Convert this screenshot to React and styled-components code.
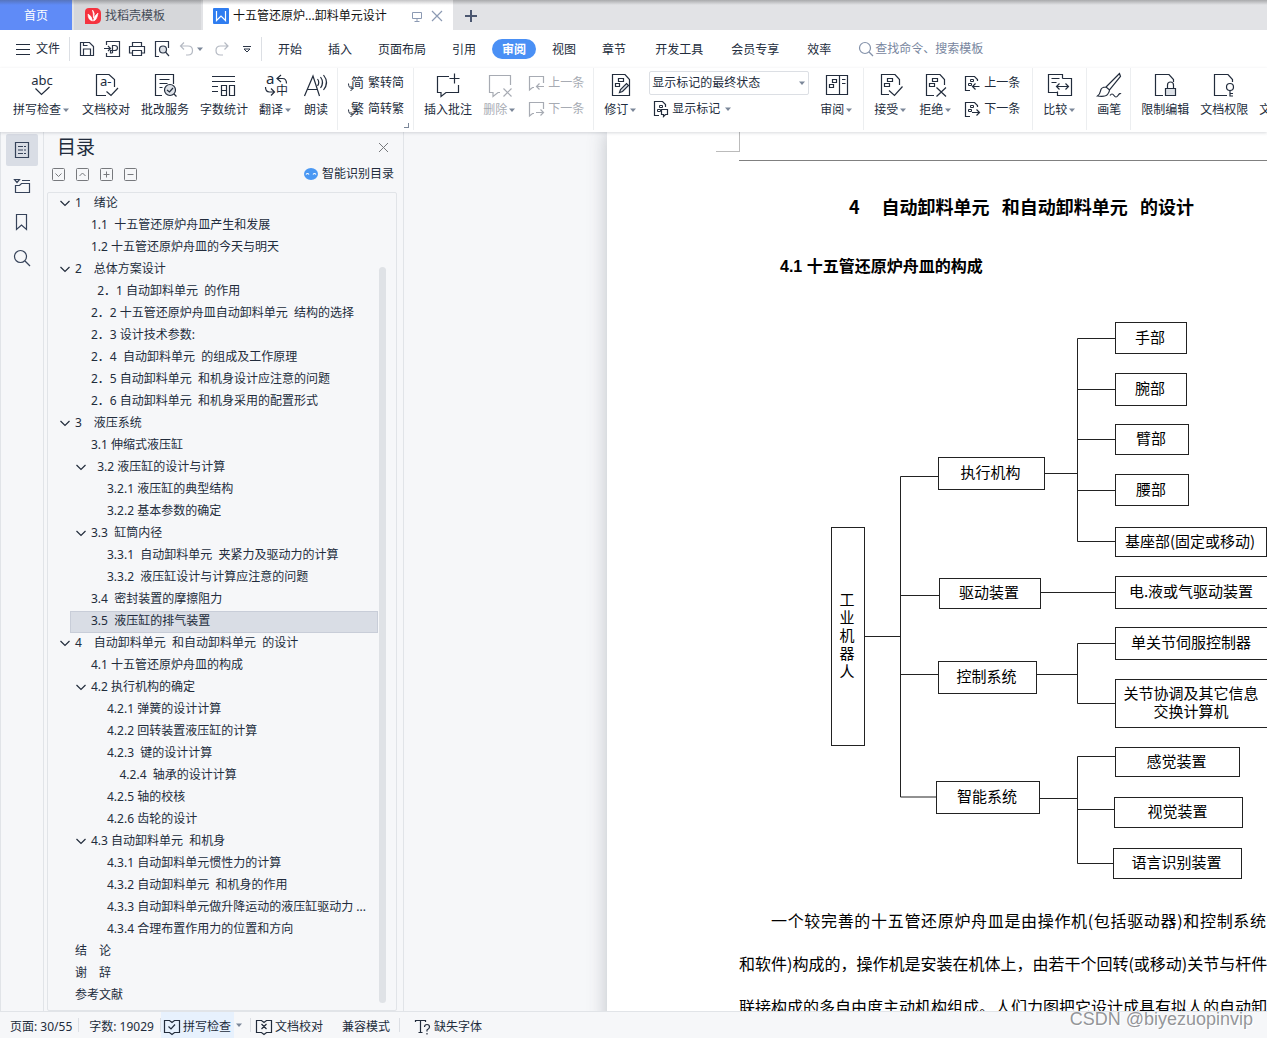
import { styled, createGlobalStyle, css } from "styled-components";

const GlobalStyle = createGlobalStyle`
  * {
    box-sizing: border-box;
  }
  body {
    margin: 0;
    background: #f6f7f9;
    color: #222c3c;
    font-family: "Noto Sans", "Noto Sans CJK SC", sans-serif;
    font-size: 12px;
    line-height: 18px;
  }
  button, input, select {
    font: inherit;
    color: inherit;
    border: 0;
    padding: 0;
    margin: 0;
    background: none;
  }
  ul, h1, h2, h3, p, figure {
    margin: 0;
    padding: 0;
    list-style: none;
    font-weight: normal;
  }
  a {
    color: inherit;
    text-decoration: none;
  }
`;

/* ---------- icons ---------- */

const Svg = styled.svg`
  display: block;
  flex: none;
  overflow: visible;
  fill: none;
  stroke: currentColor;
  stroke-width: 1.2;

  text {
    fill: currentColor;
    stroke: none;
    font-family: "Noto Sans", "Noto Sans CJK SC", sans-serif;
  }
`;

const Icon = ({ size = 24, w, children, ...rest }) => (
  <Svg
    width={w || size}
    height={size}
    viewBox={`0 0 ${w || size} ${size}`}
    aria-hidden="true"
    {...rest}
  >
    {children}
  </Svg>
);

const Arrow = () => (
  <Icon size={10}>
    <path d="M2 3.500h6L5 7z" fill="#7b8799" stroke="none" />
  </Icon>
);

const marks = <path d="M8.500 5.500h5v3h-5zM5.500 10.500h5v3h-5z" />;
const smallMarks = <path d="M6.500 4.500h3v2h-3zM4.500 8.500h3v2h-3z" strokeWidth="1" />;

const icons = {
  spell: (
    <>
      <text x="12" y="12" fontSize="13" textAnchor="middle">
        abc
      </text>
      <path d="M5.500 15.500l6 6 8-7.500" />
    </>
  ),
  proof: (
    <>
      <path d="M12 22.500H2.500v-21H15l5.500 5V14" />
      <text x="6" y="13" fontSize="13">
        a-
      </text>
      <path d="M12.500 18.500l4.500 4 7-7.500" />
    </>
  ),
  review: (
    <>
      <path d="M9 22.500H2.500v-21h18V11M6.500 6.500h10M6.500 10.500h8M6.500 14.500h3" />
      <circle cx="17" cy="17" r="5.500" fill="#dde1e7" />
      <path d="M14 17l2.500 2 3.500-4M21 21l2.500 2.500" />
    </>
  ),
  count: (
    <path d="M0 3.500h23M0 8.500h23M0 13.500h6M0 18.500h6M9.500 12.500h5v10h-5zM9.500 17.500h5M17.500 12.500h5v10h-5z" />
  ),
  translate: (
    <>
      <text x="2" y="11" fontSize="15">
        a
      </text>
      <text x="12" y="22" fontSize="12">
        中
      </text>
      <path d="M17 2l-4 3.500 4 3.500M13 5.500h5.500q4 0 4 5M1.500 14q0 5 4 5h4M7 15.500l3.500 3.500L7 22.500" />
    </>
  ),
  read: (
    <path d="M0.500 23L9 3l6.500 20M3.500 16.500h10M13.500 6q2.500 3.500 0 7M16.500 4q4 5.500 0 11M19.500 2q6 7.500 0 15" />
  ),
  comment: <path d="M13 3.500H1.500v16h3.500v4l5-4h12.500V12M18.500 0.500v10M13.500 5.500h10" />,
  remove: <path d="M12 19.500h-2l-5 4v-4H1.500v-17h21V12M15.500 15.500l8 8M23.500 15.500l-8 8" />,
  track: (
    <>
      <path d="M3.500 1.500H16l4.500 5v16h-17z" />
      <path d="M9.500 5.500h5v3h-5zM6.500 10.500h4v3h-4z" />
      <path d="M10.500 19.500l1-3 6-6 2 2-6 6z" fill="#dde1e7" />
    </>
  ),
  pane: (
    <>
      <path d="M1.500 2.500h13v19h-13zM14.500 2.500h8v19h-8zM17 6.500h3.500M17 10.500h3.500" />
      <path d="M7.500 6.500h4v3h-4zM4.500 11.500h4v3h-4z" />
    </>
  ),
  accept: (
    <>
      <path d="M10 21.500H2.500v-20H16l4.500 5V12" />
      {marks}
      <path d="M10 17.500l5.500 5 8-9" />
    </>
  ),
  reject: (
    <>
      <path d="M10 22.500H2.500v-21H16l4.500 5V12" />
      {marks}
      <path d="M12.500 14.500l9.500 9M22 14.500l-9.500 9" />
    </>
  ),
  compare: (
    <path d="M14.500 5.500v-4H.500v18h9M14.500 5.500h9v17h-14v-4M3.500 5.500h8M3.500 9.500h5M8.500 13.500h12M11.500 10.500l-3 3 3 3M17.500 10.500l3 3-3 3" />
  ),
  pen: (
    <path d="M22.500 0.500L9 14l3.500 3L23.500 3.500zM9 14q-5 0-5.500 4-.5 3-3 5 8 1 10-1.500 2-2.500 2-4.500M13 22.500q2-3 4 0t4 0 3-1.500" />
  ),
  lock: (
    <>
      <path d="M10 22.500H2.500v-21H16l4.500 5V9" />
      <path d="M12.500 15.500h10v7h-10z" fill="#dde1e7" />
      <path d="M14.500 15v-3q0-3 3-3t3 3v3" />
    </>
  ),
  key: (
    <>
      <path d="M15 22.500H2.500v-21H16l4.500 5V9" />
      <circle cx="18" cy="14" r="3.500" />
      <path d="M18 17.500v6M18 20.500h3M18 23h3" />
    </>
  ),
};

const convertArrow = <path d="M.500 8.500q0 5 4 5M2.500 11l2.500 2.500L2.500 16" strokeWidth="1" />;

const smallIcons = {
  toSimple: (
    <>
      <text x="3" y="12" fontSize="13">
        简
      </text>
      {convertArrow}
    </>
  ),
  toTraditional: (
    <>
      <text x="3" y="12" fontSize="13">
        繁
      </text>
      {convertArrow}
    </>
  ),
  commentPrev: <path d="M6 12.500H4.500l-3 2.500V1.500h14V8M16 11.500H8.500M11.500 8.500l-3 3 3 3" />,
  commentNext: <path d="M6 12.500H4.500l-3 2.500V1.500h14V8M8 11.500h7.500M12.500 8.500l3 3-3 3" />,
  markup: (
    <>
      <path d="M6 14.500H1.500v-14h8l3 3V6" />
      {smallMarks}
      <path d="M8.500 8.500h6v5h-2l-2 2v-2h-2z" />
    </>
  ),
  changePrev: (
    <>
      <path d="M6 15.500H1.500v-14h9l3 3V6" />
      {smallMarks}
      <path d="M15.500 11.500h-7M11.500 8.500l-3 3 3 3" />
    </>
  ),
  changeNext: (
    <>
      <path d="M6 15.500H1.500v-14h9l3 3V6" />
      {smallMarks}
      <path d="M8 11.500h7.500M12.500 8.500l3 3-3 3" />
    </>
  ),
};

/* ---------- window tabs ---------- */

const TabBar = styled.header`
  display: flex;
  height: 30px;
  background: linear-gradient(#a9aaac, #e2e3e6 5px);
`;

const Tab = styled.button`
  display: flex;
  align-items: center;
  gap: 4px;
  height: 30px;
  padding-top: 2px;
  ${({ $kind }) =>
    $kind === "home" &&
    css`
      width: 72px;
      justify-content: center;
      margin-right: 2px;
      color: #fff;
      background: linear-gradient(#5674bd, #5f8bf7 5px);
    `}
  ${({ $kind }) =>
    $kind === "idle" &&
    css`
      width: 127px;
      padding-left: 11px;
      margin-right: 2px;
      color: #454c58;
      background: linear-gradient(#9fa0a3, #d6d7da 5px);
    `}
  ${({ $kind }) =>
    $kind === "active" &&
    css`
      width: 250px;
      padding-left: 10px;
      color: #111;
      background: linear-gradient(#c4c4c6, #fff 5px);
    `}
  ${({ $kind }) =>
    $kind === "add" &&
    css`
      width: 36px;
      justify-content: center;
      color: #4b5770;
    `}
`;

const TabTitle = styled.span`
  flex: 1;
  text-align: left;
  white-space: nowrap;
`;

const TabActions = styled.span`
  display: flex;
  gap: 8px;
  padding-right: 10px;
  color: #8c9ab3;
`;

/* ---------- menu ---------- */

const MenuBar = styled.div`
  display: flex;
  align-items: center;
  height: 38px;
  padding-left: 16px;
  background: #fff;
`;

const FileButton = styled.button`
  display: flex;
  align-items: center;
  gap: 6px;
`;

const MenuDivider = styled.span`
  width: 1px;
  height: 24px;
  margin: 0 ${({ $tight }) => ($tight ? 6 : 9)}px;
  background: #dcdfe4;
`;

const QuickTools = styled.div`
  display: flex;
  align-items: center;
  gap: 9px;
`;

const QuickButton = styled.button`
  display: flex;
  align-items: center;
  color: ${({ $muted }) => ($muted ? "#b5bac3" : "#2b3547")};
`;

const MenuTabs = styled.nav`
  display: flex;
  gap: ${({ $gap }) => $gap}px;
  margin-right: 9px;
`;

const MenuLink = styled.a`
  height: 20px;
  padding: 1px 10px 0;
  line-height: 20px;
  border-radius: 10px;
  white-space: nowrap;
  ${({ $active }) =>
    $active &&
    css`
      color: #fff;
      font-weight: bold;
      background: #4a90f5;
    `}
`;

const SearchBox = styled.label`
  display: flex;
  align-items: center;
  gap: 1px;
  margin-left: 8px;
  color: #8492aa;

  input {
    width: 140px;
    outline: none;
  }
  input::placeholder {
    color: #78869e;
    opacity: 1;
  }
`;

/* ---------- ribbon ---------- */

const Ribbon = styled.div`
  position: relative;
  z-index: 1;
  display: flex;
  gap: 11px;
  height: 64px;
  padding-left: 13px;
  overflow: hidden;
  background: #fff;
  box-shadow: 0 1px 3px rgba(40, 50, 65, 0.18);
`;

const RibbonButton = styled.button`
  display: flex;
  flex: none;
  flex-direction: column;
  align-items: center;
  gap: 4px;
  height: 60px;
  padding-top: 5px;
  color: ${({ $muted }) => ($muted ? "#a7abb3" : "inherit")};
`;

const RibbonLabel = styled.span`
  display: flex;
  align-items: center;
  white-space: nowrap;
`;

const RibbonStack = styled.div`
  display: flex;
  flex: none;
  flex-direction: column;
  gap: 2px;
  padding-top: 3px;
  padding-right: ${({ $end }) => $end || 0}px;
`;

const StackButton = styled.button`
  display: flex;
  align-items: center;
  gap: 4px;
  height: 24px;
  white-space: nowrap;
  color: ${({ $muted }) => ($muted ? "#a7abb3" : "inherit")};
`;

const RibbonDivider = styled.span`
  flex: none;
  width: 1px;
  height: 62px;
  margin: 0 -1px 0 -2px;
  background: #eceef0;
`;

const Corner = styled.span`
  flex: none;
  align-self: flex-end;
  width: 5px;
  height: 5px;
  margin: 0 -5px 4px -11px;
  border-right: 1px solid #7b8799;
  border-bottom: 1px solid #7b8799;
`;

const SelectBox = styled.div`
  display: flex;
  align-items: center;
  width: 160px;
  height: 24px;
  padding: 0 1px 0 2px;
  border: 1px solid #dcdfe4;
  border-radius: 2px;

  select {
    flex: 1;
    appearance: none;
    outline: none;
  }
`;

const MarkupRow = styled.div`
  padding-left: 4px;

  button {
    gap: 3px;
  }
`;

const Big = ({ icon, label, arrow, muted }) => (
  <RibbonButton $muted={muted}>
    <Icon>{icons[icon]}</Icon>
    <RibbonLabel>
      {label}
      {arrow && <Arrow />}
    </RibbonLabel>
  </RibbonButton>
);

const Small = ({ icon, label, muted }) => (
  <StackButton $muted={muted}>
    <Icon size={16}>{smallIcons[icon]}</Icon>
    {label}
  </StackButton>
);

/* ---------- left side ---------- */

const Window = styled.div`
  display: flex;
  flex-direction: column;
  height: 100vh;
  overflow: hidden;
`;

const Workspace = styled.div`
  display: flex;
  flex: 1;
  min-height: 0;
`;

const Rail = styled.nav`
  display: flex;
  flex: none;
  flex-direction: column;
  gap: 4px;
  width: 44px;
  padding: 2px 0 0 5px;
  border-left: 1px solid #e1e4e8;
  border-right: 1px solid #e1e4e8;
`;

const RailButton = styled.button`
  display: grid;
  place-items: center;
  width: 32px;
  height: 32px;
  border-radius: 2px;
  color: #36435a;
  background: ${({ $active }) => ($active ? "#d9dde5" : "none")};
`;

const Panel = styled.aside`
  display: flex;
  flex: none;
  flex-direction: column;
  width: 360px;
  padding: 0 6px 0 3px;
  border-right: 1px solid #e1e4e8;
`;

const PanelHead = styled.div`
  display: flex;
  align-items: center;
  justify-content: space-between;
  height: 30px;
  padding: 0 8px 0 10px;

  h2 {
    font-size: 19px;
    line-height: 30px;
  }
`;

const PanelTools = styled.div`
  display: flex;
  align-items: center;
  gap: 11px;
  height: 30px;
  padding: 0 3px 6px 5px;
`;

const ToolButton = styled.button`
  color: #77797d;
`;

const SmartLink = styled.a`
  display: flex;
  align-items: center;
  gap: 4px;
  margin-left: auto;
`;

const OutlineBox = styled.div`
  display: flex;
  flex: 1;
  min-height: 0;
  border: 1px solid #e1e4e8;
  border-radius: 2px;
`;

const OutlineList = styled.ul`
  flex: 1;
  min-width: 0;
  overflow: hidden;
`;

const OutlineItem = styled.li`
  display: flex;
  align-items: center;
  gap: 5px;
  height: 22px;
  padding-bottom: 2px;
  white-space: pre;
  margin-left: ${({ $level }) => ($level ? 22 : 0)}px;
  padding-left: ${({ $level }) => ($level ? 16 * $level - 10 : 12)}px;
  ${({ $selected }) =>
    $selected &&
    css`
      background: #d9dde5;
      box-shadow: inset 0 0 0 1px #c8cdd8;
    `}
`;

const Twisty = styled.span`
  width: 10px;
  flex: none;
`;

const Thumb = styled.div`
  width: 7px;
  margin: 74px 10px 7px 1px;
  border-radius: 4px;
  background: #dfe2e6;
`;

const outline = [
  [0, "1　绪论", true],
  [1, "1.1  十五管还原炉舟皿产生和发展"],
  [1, "1.2 十五管还原炉舟皿的今天与明天"],
  [0, "2　总体方案设计", true],
  [1, "  2．1 自动卸料单元  的作用"],
  [1, "2．2 十五管还原炉舟皿自动卸料单元  结构的选择"],
  [1, "2．3 设计技术参数:"],
  [1, "2．4  自动卸料单元  的组成及工作原理"],
  [1, "2．5 自动卸料单元  和机身设计应注意的问题"],
  [1, "2．6 自动卸料单元  和机身采用的配置形式"],
  [0, "3　液压系统", true],
  [1, "3.1 伸缩式液压缸"],
  [1, "  3.2 液压缸的设计与计算", true],
  [2, "3.2.1 液压缸的典型结构"],
  [2, "3.2.2 基本参数的确定"],
  [1, "3.3  缸筒内径", true],
  [2, "3.3.1  自动卸料单元  夹紧力及驱动力的计算"],
  [2, "3.3.2  液压缸设计与计算应注意的问题"],
  [1, "3.4  密封装置的摩擦阻力"],
  [1, "3.5  液压缸的排气装置"],
  [0, "4　自动卸料单元  和自动卸料单元  的设计", true],
  [1, "4.1 十五管还原炉舟皿的构成"],
  [1, "4.2 执行机构的确定", true],
  [2, "4.2.1 弹簧的设计计算"],
  [2, "4.2.2 回转装置液压缸的计算"],
  [2, "4.2.3  键的设计计算"],
  [2, "    4.2.4  轴承的设计计算"],
  [2, "4.2.5 轴的校核"],
  [2, "4.2.6 齿轮的设计"],
  [1, "4.3 自动卸料单元  和机身", true],
  [2, "4.3.1 自动卸料单元惯性力的计算"],
  [2, "4.3.2 自动卸料单元  和机身的作用"],
  [2, "4.3.3 自动卸料单元做升降运动的液压缸驱动力 ..."],
  [2, "4.3.4 合理布置作用力的位置和方向"],
  [0, "结　论"],
  [0, "谢　辞"],
  [0, "参考文献"],
];

/* ---------- document ---------- */

const DocumentArea = styled.main`
  flex: 1;
  min-width: 0;
  overflow: hidden;
`;

const Page = styled.article`
  width: 829px;
  min-height: 100%;
  margin-left: 203px;
  padding: 0 132px;
  color: #000;
  background: #fff;
  box-shadow: 0 0 18px rgba(60, 70, 85, 0.3);
  font-family: "Noto Sans CJK SC", sans-serif;
`;

const PageHeader = styled.div`
  height: 29px;
  border-bottom: 1px solid #808080;
`;

const MarginMark = styled.div`
  width: 24px;
  height: 20px;
  margin-left: -23px;
  border-right: 1px solid #bbb;
  border-bottom: 1px solid #bbb;
`;

const ChapterTitle = styled.h1`
  margin-top: 31px;
  font-size: 18px;
  font-weight: bold;
  line-height: 28px;
  text-align: center;
  white-space: pre;
`;

const SectionTitle = styled.h3`
  margin-top: 35px;
  padding-left: 41px;
  font-family: "Liberation Sans", "Noto Sans CJK SC", sans-serif;
  font-size: 16px;
  font-weight: bold;
  line-height: 24px;
`;

const Diagram = styled.figure`
  position: relative;
  height: 560px;
  margin-top: 42px;
  font-size: 15px;
  line-height: 18px;

  svg {
    stroke: #222;
    stroke-width: 1;
  }
`;

const Node = styled.div`
  position: absolute;
  left: ${({ $x }) => $x}px;
  top: ${({ $y }) => $y}px;
  width: ${({ $w }) => $w}px;
  height: ${({ $h }) => $h}px;
  display: flex;
  align-items: center;
  justify-content: center;
  padding: 0 2px 3px 0;
  text-align: center;
  white-space: pre;
  border: 1px solid #222;
`;

const BodyLine = styled.p`
  margin-right: 38px;
  padding-left: ${({ $indent }) => ($indent ? "2em" : 0)};
  font-size: 16px;
  line-height: 43px;
  white-space: nowrap;
  text-align: justify;
  text-align-last: justify;
`;

const BodyText = styled.div`
  margin-top: 18px;
`;

const nodes = [
  [92, 206, 34, 219, "工\n业\n机\n器\n人"],
  [199, 136, 107, 33, "执行机构"],
  [200, 257, 102, 31, "驱动装置"],
  [199, 340, 99, 33, "控制系统"],
  [197, 460, 104, 33, "智能系统"],
  [376, 1, 72, 32, "手部"],
  [376, 52, 72, 33, "腕部"],
  [376, 103, 74, 31, "臂部"],
  [376, 153, 74, 32, "腰部"],
  [376, 206, 152, 30, "基座部(固定或移动)"],
  [376, 255, 154, 33, "电.液或气驱动装置"],
  [376, 306, 154, 33, "单关节伺服控制器"],
  [376, 358, 154, 49, "关节协调及其它信息\n交换计算机"],
  [376, 426, 125, 30, "感觉装置"],
  [375, 476, 129, 31, "视觉装置"],
  [374, 527, 129, 31, "语言识别装置"],
];

const links =
  "M126 315.500h35.500M199 155.500h-37.500v320.500h36M161.500 274.500h38.500M161.500 353.500h38" +
  "M306 152.500h32.500M377 17.500h-38.500v203h38.500M338.500 68.500h38M338.500 118.500h38M338.500 169.500h38" +
  "M302 271.500h74" +
  "M298 353.500h40.500M377 322.500h-38.500v60h38.500" +
  "M301 477.500h37.500M377 435.500h-38.500v107h36M338.500 488.500h37";

/* ---------- status bar ---------- */

const StatusBar = styled.footer`
  position: relative;
  display: flex;
  align-items: center;
  height: 27px;
  padding-left: 10px;
  border-top: 1px solid #e1e4e8;
  background: #f6f7f9;
  white-space: nowrap;
`;

const StatusDivider = styled.span`
  width: 1px;
  height: 14px;
  margin: 0 ${({ $right = 10 }) => $right}px 0 6px;
  background: #dcdfe4;
`;

const StatusButton = styled.button`
  display: flex;
  align-items: center;
  gap: 3px;
  height: 26px;
  padding: 4px 3px 0;
  margin-right: ${({ $end }) => $end || 0}px;
  background: ${({ $on }) => ($on ? "#e7f1fd" : "none")};
`;

const StatusText = styled.span`
  padding-top: 4px;
`;

const Watermark = styled.span`
  position: absolute;
  right: 14px;
  top: -5px;
  color: rgba(120, 122, 126, 0.8);
  font-family: "Liberation Sans", sans-serif;
  font-size: 18px;
  line-height: 24px;
  text-shadow: 1px 1px 0 #fff;
`;

const menuItems = ["开始", "插入", "页面布局", "引用", "审阅", "视图", "章节"];
const moreMenuItems = ["开发工具", "会员专享", "效率"];

const toolPaths = {
  展开: "M3.500 5.500l3 3 3-3",
  收起: "M3.500 8l3-3 3 3",
  增加: "M3.500 6.500h6M6.500 3.500v6",
  减少: "M3.500 6.500h6",
};

const App = () => {
  return (
    <Window>
      <GlobalStyle />
      <TabBar>
        <Tab $kind="home">首页</Tab>
        <Tab $kind="idle">
          <Icon size={16}>
            <path
              d="M4 0h7a5 5 0 0 1 5 5v6a5 5 0 0 1-5 5H0V4a4 4 0 0 1 4-4z"
              fill="#f5333f"
              stroke="none"
            />
            <path
              d="M7.500 2q3 3 1 8 0-4-1-8zM3 6q4 2 4.500 7Q3 12 3 6zM13 5q-1 7-4.500 8 0-5 4.500-8z"
              fill="#fff"
              stroke="#fff"
              strokeWidth="0.6"
            />
          </Icon>
          <TabTitle>找稻壳模板</TabTitle>
        </Tab>
        <Tab $kind="active">
          <Icon size={16}>
            <rect width="16" height="16" rx="1" fill="#2f7df0" stroke="none" />
            <path d="M3.500 3v9.500L8 8l4.500 4.500V3" stroke="#fff" />
          </Icon>
          <TabTitle>十五管还原炉...卸料单元设计</TabTitle>
          <TabActions>
            <Icon size={12}>
              <path d="M1.500 2.500h9v6h-9zM6 8.500v3M3.500 11.500h5" strokeWidth="1" />
            </Icon>
            <Icon size={12}>
              <path d="M1 1l10 10M11 1L1 11" />
            </Icon>
          </TabActions>
        </Tab>
        <Tab $kind="add" aria-label="新建">
          <Icon size={12}>
            <path d="M6 0v12M0 6h12" strokeWidth="2" />
          </Icon>
        </Tab>
      </TabBar>

      <MenuBar>
        <FileButton>
          <Icon size={14}>
            <path d="M0 2.500h14M0 7.500h14M0 12.500h14" strokeWidth="1" />
          </Icon>
          文件
        </FileButton>
        <MenuDivider />
        <QuickTools>
          <QuickButton aria-label="保存">
            <Icon size={16}>
              <path d="M1.500 1.500h9l4 4v9h-13zM4.500 14v-6h7v6M4.500 1.500v3h4" />
            </Icon>
          </QuickButton>
          <QuickButton aria-label="输出为PDF">
            <Icon size={16}>
              <path d="M2.500 4V.500h13v15h-13V12M0 7.500h6M4 5l2.500 2.500L4 10M8.500 12V4.500h2q3 0 3 2.500t-3 2.500h-4v2.500h2" />
            </Icon>
          </QuickButton>
          <QuickButton aria-label="打印">
            <Icon size={16}>
              <path d="M3.500 5V1.500h9V5M3.500 12h-3V5.500h15V12h-3M3.500 9.500h9v5h-9z" />
            </Icon>
          </QuickButton>
          <QuickButton aria-label="打印预览">
            <Icon size={16}>
              <path d="M5 15.500H1.500v-15h13V7" />
              <circle cx="9" cy="8.500" r="3.500" fill="#dde1e7" />
              <path d="M11.500 11l3.500 4" />
            </Icon>
          </QuickButton>
          <QuickButton $muted aria-label="撤销">
            <Icon size={16}>
              <path d="M5 1.500L1.500 5 5 8.500M1.500 5H9q4.500 0 4.500 4.500T9 14H7" />
            </Icon>
            <Arrow />
          </QuickButton>
          <QuickButton $muted aria-label="恢复">
            <Icon size={16}>
              <path d="M10.500 1.500L14 5l-3.500 3.500M14 5H6.500Q2 5 2 9.500T6.500 14H9" />
            </Icon>
          </QuickButton>
          <QuickButton aria-label="自定义">
            <Icon size={16}>
              <path d="M4 5.500h8M5 8l3 3 3-3z" strokeWidth="1" />
            </Icon>
          </QuickButton>
        </QuickTools>
        <MenuDivider $tight />
        <MenuTabs $gap={6}>
          {menuItems.map((item) => (
            <MenuLink key={item} href="#" $active={item === "审阅"}>
              {item}
            </MenuLink>
          ))}
        </MenuTabs>
        <MenuTabs $gap={8}>
          {moreMenuItems.map((item) => (
            <MenuLink key={item} href="#">
              {item}
            </MenuLink>
          ))}
        </MenuTabs>
        <SearchBox>
          <Icon size={16}>
            <circle cx="7" cy="7" r="5.500" />
            <path d="M11 11l4 4" />
          </Icon>
          <input placeholder="查找命令、搜索模板" aria-label="查找命令、搜索模板" />
        </SearchBox>
      </MenuBar>

      <Ribbon>
        <Big icon="spell" label="拼写检查" arrow />
        <Big icon="proof" label="文档校对" />
        <Big icon="review" label="批改服务" />
        <Big icon="count" label="字数统计" />
        <Big icon="translate" label="翻译" arrow />
        <Big icon="read" label="朗读" />
        <RibbonDivider />
        <RibbonStack>
          <Small icon="toSimple" label="繁转简" />
          <Small icon="toTraditional" label="简转繁" />
        </RibbonStack>
        <Corner />
        <RibbonDivider />
        <Big icon="comment" label="插入批注" />
        <Big icon="remove" label="删除" arrow muted />
        <RibbonStack>
          <Small icon="commentPrev" label="上一条" muted />
          <Small icon="commentNext" label="下一条" muted />
        </RibbonStack>
        <RibbonDivider />
        <Big icon="track" label="修订" arrow />
        <RibbonStack>
          <SelectBox>
            <select aria-label="显示标记">
              <option>显示标记的最终状态</option>
            </select>
            <Arrow />
          </SelectBox>
          <MarkupRow>
            <StackButton>
              <Icon size={16}>{smallIcons.markup}</Icon>
              显示标记
              <Arrow />
            </StackButton>
          </MarkupRow>
        </RibbonStack>
        <Big icon="pane" label="审阅" arrow />
        <RibbonDivider />
        <Big icon="accept" label="接受" arrow />
        <Big icon="reject" label="拒绝" arrow />
        <RibbonStack $end={3}>
          <Small icon="changePrev" label="上一条" />
          <Small icon="changeNext" label="下一条" />
        </RibbonStack>
        <RibbonDivider />
        <Big icon="compare" label="比较" arrow />
        <RibbonDivider />
        <Big icon="pen" label="画笔" />
        <RibbonDivider />
        <Big icon="lock" label="限制编辑" />
        <Big icon="key" label="文档权限" />
        <Big label="文档" />
      </Ribbon>

      <Workspace>
        <Rail>
          <RailButton $active aria-label="目录">
            <Icon size={16}>
              <path d="M1.500.500h13v15h-13zM4 4.500h5M10 4.500h2M4 8h5M10 8h2M4 11.500h5M10 11.500h2" />
            </Icon>
          </RailButton>
          <RailButton aria-label="章节">
            <Icon size={16}>
              <path d="M.500 1.500h5l-2.500 3zM8 2.500h8M1.500 7v7.500h14v-9h-8l-2 2h-4" />
            </Icon>
          </RailButton>
          <RailButton aria-label="书签">
            <Icon size={16}>
              <path d="M2.500.500h10v15l-5-4.500-5 4.500z" />
            </Icon>
          </RailButton>
          <RailButton aria-label="查找">
            <Icon size={16}>
              <circle cx="6.500" cy="6.500" r="6" />
              <path d="M11 11l5 5" />
            </Icon>
          </RailButton>
        </Rail>

        <Panel>
          <PanelHead>
            <h2>目录</h2>
            <ToolButton aria-label="关闭">
              <Icon size={11}>
                <path d="M1 1l9 9M10 1l-9 9" strokeWidth="1" />
              </Icon>
            </ToolButton>
          </PanelHead>
          <PanelTools>
            {Object.entries(toolPaths).map(([name, d]) => (
              <ToolButton key={name} aria-label={name}>
                <Icon size={13}>
                  <rect x="0.5" y="0.5" width="12" height="12" rx="1" strokeWidth="1" />
                  <path d={d} strokeWidth="1" />
                </Icon>
              </ToolButton>
            ))}
            <SmartLink href="#">
              <Icon size={14}>
                <ellipse cx="7" cy="7" rx="7" ry="6" fill="#4a98f3" stroke="none" />
                <path d="M2 7.500q1.500-2 3 0M9 7.500q1.500-2 3 0" stroke="#fff" />
              </Icon>
              智能识别目录
            </SmartLink>
          </PanelTools>
          <OutlineBox>
            <OutlineList>
              {outline.map(([level, text, open]) => (
                <OutlineItem key={text} $level={level} $selected={text.startsWith("3.5")}>
                  <Twisty>
                    {open && (
                      <Icon size={10}>
                        <path d="M.500 3l4.500 4.500L9.500 3" />
                      </Icon>
                    )}
                  </Twisty>
                  {text}
                </OutlineItem>
              ))}
            </OutlineList>
            <Thumb />
          </OutlineBox>
        </Panel>

        <DocumentArea>
          <Page>
            <PageHeader>
              <MarginMark />
            </PageHeader>
            <ChapterTitle>{"4　 自动卸料单元   和自动卸料单元   的设计"}</ChapterTitle>
            <SectionTitle>4.1 十五管还原炉舟皿的构成</SectionTitle>
            <Diagram>
              <Icon w={530} size={560}>
                <path d={links} />
              </Icon>
              {nodes.map(([x, y, w, h, text]) => (
                <Node key={text} $x={x} $y={y} $w={w} $h={h}>
                  {text}
                </Node>
              ))}
            </Diagram>
            <BodyText>
              <BodyLine $indent>
                一个较完善的十五管还原炉舟皿是由操作机(包括驱动器)和控制系统
              </BodyLine>
              <BodyLine>
                和软件)构成的，操作机是安装在机体上，由若干个回转(或移动)关节与杆件
              </BodyLine>
              <BodyLine>
                联接构成的多自由度主动机构组成。人们力图把它设计成具有拟人的自动卸
              </BodyLine>
            </BodyText>
          </Page>
        </DocumentArea>
      </Workspace>

      <StatusBar>
        <StatusText>页面: 30/55</StatusText>
        <StatusDivider />
        <StatusText>字数: 19029</StatusText>
        <StatusDivider $right={0} />
        <StatusButton $on>
          <Icon size={16}>
            <path d="M6 1.500H.500v12h5l2.500 2 2.500-2h5v-12h-5L8 3.500l-2.500-2M4.500 7.500L7 10l4-4.500" />
          </Icon>
          拼写检查
        </StatusButton>
        <Arrow />
        <StatusDivider $right={2} />
        <StatusButton $end={13}>
          <Icon size={16}>
            <path d="M6 1.500H.500v12h5l2.500 2 2.500-2h5v-12h-5L8 3.500l-2.500-2M5.500 5l5 5M10.500 5l-5 5" />
          </Icon>
          文档校对
        </StatusButton>
        <StatusButton>兼容模式</StatusButton>
        <StatusDivider $right={12} />
        <StatusButton>
          <Icon size={16}>
            <path d="M.500 3V1.500h10V3M5.500 1.500v12M3.500 13.500h4M9.500 8q0-2.500 2.500-2.500t2.500 2.500q0 1.500-2.500 3v1.500M12 14v1.500" />
          </Icon>
          缺失字体
        </StatusButton>
        <Watermark>CSDN @biyezuopinvip</Watermark>
      </StatusBar>
    </Window>
  );
};

export default App;
